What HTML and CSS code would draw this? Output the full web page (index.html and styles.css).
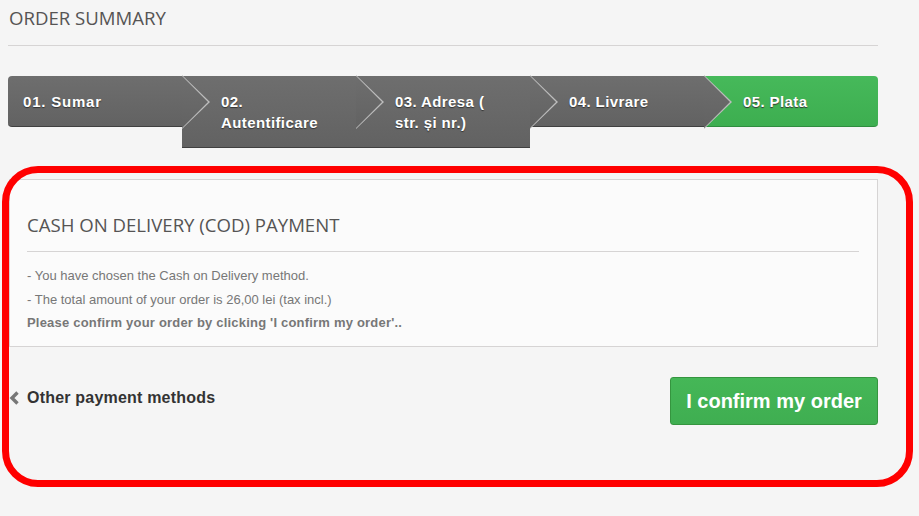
FILE: index.html
```html
<!doctype html>
<html lang="en">
<head>
	<meta charset="UTF-8">
	<title>Order summary - Plata</title>
	<link rel="stylesheet" href="styles.css">
</head>
<body>
	<div class="page">
		<!-- titlu -->
		<h1 class="page-heading">Order summary</h1>

		<!-- pasii comenzii -->
		<ul class="steps">
			<li class="step first"><span>01. Sumar</span></li>
			<li class="step"><span>02.<br>Autentificare</span></li>
			<li class="step"><span>03. Adresa (<br>str. și nr.)</span></li>
			<li class="step"><span>04. Livrare</span></li>
			<li class="step current last"><span>05. Plata</span></li>
		</ul>

		<!-- plata ramburs -->
		<div class="box">
			<h3 class="page-subheading">Cash on delivery (COD) payment</h3>
			<p>- You have chosen the Cash on Delivery method.</p>
			<p>- The total amount of your order is 26,00 lei (tax incl.)</p>
			<p><b>Please confirm your order by clicking 'I confirm my order'..</b></p>
		</div>

		<div class="cart-navigation">
			<a class="button-back" href="#">
				<svg width="11" height="14" viewBox="0 0 11 14"><path d="M8.5 1.5 L3 7 L8.5 12.5" fill="none" stroke="#777" stroke-width="3.4"/></svg>
				Other payment methods
			</a>
			<button class="button-confirm" type="button">I confirm my order</button>
		</div>

		<!-- marcaj rosu -->
		<div class="highlight"></div>
	</div>
</body>
</html>
```

FILE: styles.css
```css
html,body,h1,h3,p,ul,li{
	margin:0; padding:0;
}
html{
	background:#f5f5f5;
}
body{
	font-family:"Liberation Sans", Arial, sans-serif; color:#777; font-size:13px;
}
.page{
	width:870px; margin-left:8px; position:relative; padding-bottom:100px;
}
.page-heading{
	font-family:"Open Sans", sans-serif; font-weight:400; font-size:18.6px; text-transform:uppercase; color:#555454;
	padding:5px 0 14px 1px; border-bottom:1px solid #d6d4d4; line-height:26px;
}

/* pasi */
.steps{
	list-style:none; display:flex; align-items:flex-start; margin-top:30px;
}
.step{
	width:174px; position:relative; background:linear-gradient(#6e6e6e,#626262);
	border-bottom:1px solid #404040; box-sizing:border-box;
	padding:15px 10px 14px 39px; color:#fff; font-weight:bold; font-size:15px; line-height:21px;
	text-shadow:0 1px 1px #333; letter-spacing:0.4px;
}
.step.first{
	padding-left:15px; border-radius:4px 0 0 4px; letter-spacing:0.8px;
}
.step.last{
	border-radius:0 4px 4px 0;
}
.step.current{
	background:linear-gradient(#46b95a,#3dae50); border-bottom-color:#2f8d3f;
}
.step:not(.last)::before,
.step:not(.last)::after{
	content:""; position:absolute; top:-1px; clip-path:polygon(0 0,100% 50%,0 100%);
}
.step:not(.last)::before{
	right:-28px; width:28px; height:54px; top:-1px; background:#bdbdbd; z-index:1;
}
.step:not(.last)::after{
	right:-26px; width:26px; height:52px; top:0; background:linear-gradient(#6e6e6e,#626262); z-index:2;
}

/* caseta */
.box{
	margin-top:31px; margin-left:1px; background:#fbfbfb; border:1px solid #d6d4d4; padding:32px 18px 11px 17px;
}
.page-subheading{
	font-family:"Open Sans", sans-serif; font-weight:400; font-size:18.6px; text-transform:uppercase; color:#555454;
	line-height:26px; padding-bottom:13px; border-bottom:1px solid #d6d4d4; margin-bottom:12px;
}
.box p{
	line-height:23.5px; font-size:13px;
}
.box b{
	color:#777; letter-spacing:0.2px;
}

/* navigare */
.cart-navigation{
	display:flex; justify-content:space-between; align-items:flex-start; margin-top:30px; padding-left:1px;
}
.button-back{
	display:flex; align-items:center; gap:7px; color:#333; font-weight:bold; font-size:16px; text-decoration:none;
	margin-top:12px; letter-spacing:0.2px;
}
.button-confirm{
	width:208px; height:48px; background:linear-gradient(#45b757,#3fae51); border:1px solid #35953f; border-radius:3px;
	color:#fff; font-family:"Liberation Sans", Arial, sans-serif; font-weight:bold; font-size:20px; cursor:pointer;
	padding-top:3px;
}

.highlight{
	position:absolute; left:-6px; top:166px; width:911px; height:321px; box-sizing:border-box;
	border:7px solid #ff0000; border-radius:36px; pointer-events:none;
}
```
